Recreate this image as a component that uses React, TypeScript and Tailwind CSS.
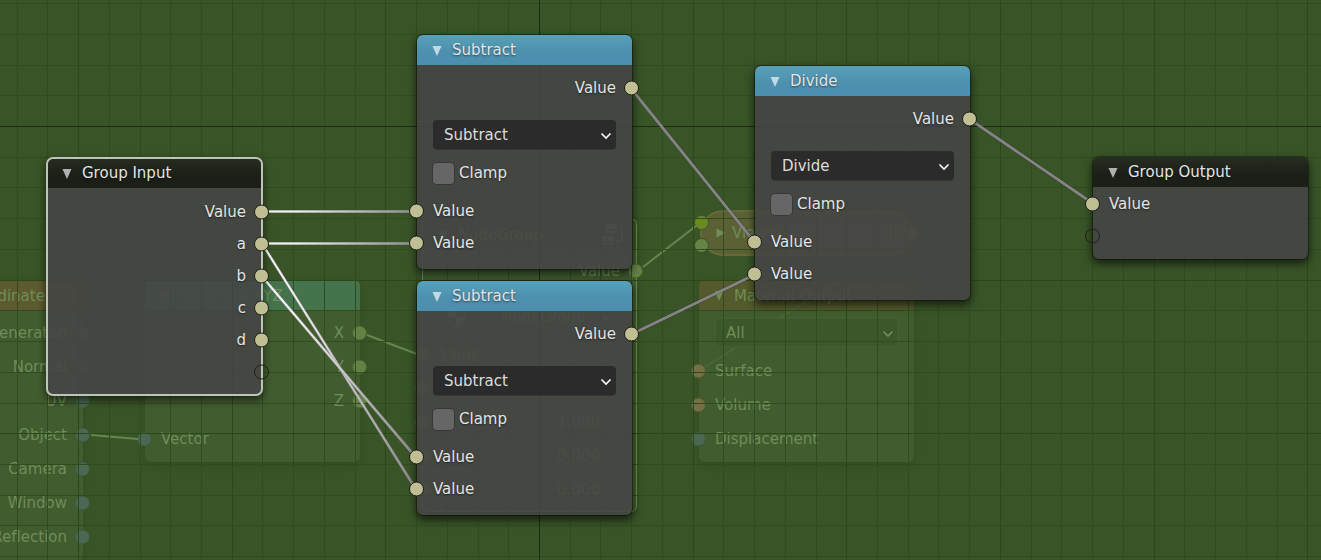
import React from "react";

type Tone = "value" | "color" | "lime" | "vector" | "shader" | "empty";

const MINOR = 30.73;
const ORIGIN = { x: 539, y: 126 };

const liveTones: Record<Tone, string> = {
  value: "bg-[#bfbf93] border-[#1e1e1a]",
  color: "bg-[#678447] border-[#35502a]",
  lime: "bg-[#6b8a25] border-[#3c5a24]",
  vector: "bg-[#4a6854] border-[#3b5a38]",
  shader: "bg-[#766f44] border-[#4a5a2c]",
  empty: "border-[#1c201a]",
};

const ghostTones: Record<Tone, string> = {
  ...liveTones,
  value: "bg-[#658246] border-[#45632f]",
};

function Socket({ side, tone = "value", ghost = false }: { side: "in" | "out"; tone?: Tone; ghost?: boolean }) {
  const tones = ghost ? ghostTones : liveTones;
  return (
    <span
      className={`absolute top-1/2 size-[15px] -translate-y-1/2 rounded-full border ${
        side === "in" ? "-left-2" : "-right-[7px]"
      } ${tones[tone]}`}
    />
  );
}

function Triangle({ right = false }: { right?: boolean }) {
  return (
    <svg viewBox="0 0 10 10" className="size-2.5 fill-current" aria-hidden="true">
      {right ? <path d="M0.5 0.5 9.5 5 0.5 9.5Z" /> : <path d="M0.5 0H9.5L5 10Z" />}
    </svg>
  );
}

function Chevron({ className }: { className: string }) {
  return (
    <svg viewBox="0 0 12 8" className={`h-2 w-3 ${className}`} fill="none" stroke="currentColor" strokeWidth="1.6" aria-hidden="true">
      <path d="M1.5 1.5 6 6 10.5 1.5" />
    </svg>
  );
}

const liveHeaders = {
  math: "bg-linear-to-b from-[#57a1b9] to-[#4d8fae] to-60%",
  group: "bg-linear-to-b from-[#272d21] to-[#1b1f18] to-60%",
};

function Node({
  title,
  kind,
  place,
  selected = false,
  children,
}: {
  title: string;
  kind: keyof typeof liveHeaders;
  place: string;
  selected?: boolean;
  children: React.ReactNode;
}) {
  return (
    <section
      aria-label={title}
      className={`absolute w-[215px] rounded-md bg-[#454545]/89 text-[#e4e4e4] shadow-[0_4px_9px_1px_rgba(0,0,0,0.6)] [text-shadow:0_1px_2px_rgba(0,0,0,0.5)] ${
        selected ? "outline-2 -outline-offset-1 outline-[#bfc4bb]" : "outline outline-black/30"
      } ${place}`}
    >
      <header className={`flex h-[30px] items-center gap-2.5 rounded-t-md pl-[15px] ${liveHeaders[kind]}`}>
        <button type="button" aria-label={`Collapse ${title}`} className="pt-0.5 text-white/65">
          <Triangle />
        </button>
        <h2>{title}</h2>
      </header>
      {children}
    </section>
  );
}

function Row({ label, side, tone, ghost }: { label: string; side: "in" | "out"; tone?: Tone; ghost?: boolean }) {
  return (
    <li className={`relative flex items-center px-4 ${ghost ? "h-[34px]" : "h-8"} ${side === "out" ? "justify-end" : ""}`}>
      {label}
      <Socket side={side} tone={tone} ghost={ghost} />
    </li>
  );
}

function MathNode({ operation, place }: { operation: string; place: string }) {
  return (
    <Node title={operation} kind="math" place={place}>
      <div className="pt-[7px] pb-2.5">
        <ul>
          <Row label="Value" side="out" />
        </ul>
        <div className="relative mx-4 mt-4">
          <select
            aria-label="Operation"
            defaultValue={operation}
            className="h-[29px] w-full appearance-none rounded bg-[#2b2b2b] pl-[11px] text-[#dcdcdc] shadow-[0_1px_0_rgba(0,0,0,0.2)]"
          >
            <option>Add</option>
            <option>Subtract</option>
            <option>Multiply</option>
            <option>Divide</option>
          </select>
          <Chevron className="pointer-events-none absolute top-3 right-1 text-white" />
        </div>
        <label className="mx-4 mt-2 flex h-8 items-center gap-[5px]">
          <input type="checkbox" className="size-[21px] appearance-none rounded bg-[#666666] shadow-[0_0_0_1px_rgba(0,0,0,0.2)] checked:bg-[#5680c2]" />
          Clamp
        </label>
        <ul className="mt-1.5">
          <Row label="Value" side="in" />
          <Row label="Value" side="in" />
        </ul>
      </div>
    </Node>
  );
}

function GhostNode({
  title,
  header,
  place,
  children,
}: {
  title: string;
  header: string;
  place: string;
  children: React.ReactNode;
}) {
  return (
    <section aria-label={title} className={`absolute w-[215px] rounded-md bg-[#415c2f] shadow-[0_3px_8px_rgba(0,0,0,0.1)] ${place}`}>
      <header className={`flex h-[31px] items-center gap-2.5 rounded-t-md pl-[15px] ${header}`}>
        <Triangle />
        <h2>{title}</h2>
      </header>
      {children}
    </section>
  );
}

function GhostTree() {
  return (
    <div className="absolute inset-0 text-[#6e8d58]">
      <GhostNode title="Texture Coordinate" header="bg-[#5c5a2e]" place="top-[280px] -left-[132px]">
        <ul className="pt-[5px] pb-2">
          {["Generated", "Normal", "UV", "Object", "Camera", "Window", "Reflection"].map((name) => (
            <Row key={name} label={name} side="out" tone="vector" ghost />
          ))}
        </ul>
      </GhostNode>

      <GhostNode title="Separate XYZ" header="bg-[#44734c]" place="top-[280px] left-[145px]">
        <ul className="pt-[5px]">
          <Row label="X" side="out" ghost />
          <Row label="Y" side="out" ghost />
          <Row label="Z" side="out" ghost />
        </ul>
        <ul className="pt-1 pb-1.5">
          <Row label="Vector" side="in" tone="vector" ghost />
        </ul>
      </GhostNode>

      <GhostNode title="NodeGroup" header="bg-[#3a5728]" place="top-[218px] left-[422px] border border-[#6c8b55]">
        <svg viewBox="0 0 22 22" className="absolute top-1 right-3 size-[22px]" aria-hidden="true">
          <rect x="3" y="1" width="12" height="9" rx="2" fill="currentColor" />
          <rect x="0" y="13" width="12" height="9" rx="2" fill="currentColor" />
          <path d="M5 7H13M2 19H10" stroke="#3a5728" strokeWidth="1.5" />
          <path d="M17 4H20V18H14M16 16 14 18 16 20" fill="none" stroke="currentColor" strokeWidth="1.5" />
        </svg>
        <ul className="pt-1">
          <Row label="Value" side="out" ghost />
        </ul>
        <div className="mx-4 mt-3.5 flex h-[29px] items-center gap-1">
          <svg viewBox="0 0 22 22" className="ml-1.5 size-[22px]" aria-hidden="true">
            <circle cx="11" cy="11" r="9.5" fill="none" stroke="currentColor" strokeWidth="1.5" />
            <path d="M11 3A8 8 0 0 0 3 11H11ZM11 11V19A8 8 0 0 0 19 11Z" fill="currentColor" />
          </svg>
          <Chevron className="" />
          <span className="ml-3.5">NodeGroup</span>
          <Chevron className="mr-2 ml-auto" />
        </div>
        <ul className="pt-1.5 pb-1">
          <Row label="Value" side="in" ghost />
          {["", "1.000", "0.000", "0.000"].map((amount, index) => (
            <li key={index} className="relative flex h-[34px] items-center justify-end px-9">
              {amount}
              <Socket side="in" ghost />
            </li>
          ))}
        </ul>
      </GhostNode>

      <section
        aria-label="Viewer"
        className="absolute top-[210px] left-[700px] flex h-[46px] w-[214px] items-center gap-1.5 rounded-full border-2 border-[#676a37] bg-[#5c6135] pl-3.5"
      >
        <Triangle right />
        <h2>Viewer</h2>
        <span className="mr-3.5 ml-auto">||</span>
        <span className={`absolute top-[3px] -left-2 size-[15px] rounded-full border ${ghostTones.lime}`} />
        <span className={`absolute top-[26px] -left-2 size-[15px] rounded-full border ${ghostTones.color}`} />
        <Socket side="out" tone="shader" ghost />
      </section>

      <GhostNode title="Material Output" header="bg-[#545a2b]" place="top-[280px] left-[699px]">
        <div className="relative mx-4 mt-[7px]">
          <select
            aria-label="Target"
            defaultValue="All"
            className="h-[29px] w-full appearance-none rounded border border-[#45602f] bg-[#3c5729] pl-2.5"
          >
            <option>All</option>
            <option>Cycles</option>
            <option>Eevee</option>
          </select>
          <Chevron className="pointer-events-none absolute top-3 right-1" />
        </div>
        <ul className="pt-[7px] pb-1.5">
          <Row label="Surface" side="in" tone="shader" ghost />
          <Row label="Volume" side="in" tone="shader" ghost />
          <Row label="Displacement" side="in" tone="vector" ghost />
        </ul>
      </GhostNode>

      <svg className="absolute inset-0 size-full" fill="none" strokeWidth="2" aria-hidden="true">
        <path d="M91 435 138 439M367 335 422 356M643 267 696 226" stroke="#66854f" />
        <path d="M705 367 735 348M780 318 880 255" stroke="#4b6638" />
      </svg>
    </div>
  );
}

function Grid() {
  const steps = Array.from({ length: 161 }, (_, i) => i - 40);
  const tint = (step: number) => (step === 0 ? "#1e2b12" : step % 5 === 0 ? "#2b4819" : "#304c1f");
  const order = [...steps.filter((s) => s % 5), ...steps.filter((s) => s % 5 === 0 && s), 0];
  return (
    <svg className="absolute inset-0 size-full" shapeRendering="crispEdges" aria-hidden="true">
      {order.map((s) => {
        const x = Math.round(ORIGIN.x + s * MINOR);
        const y = Math.round(ORIGIN.y + s * MINOR);
        return (
          <g key={s} fill={tint(s)}>
            <rect x={x} y="0" width="1" height="100%" />
            <rect x="0" y={y} width="100%" height="1" />
          </g>
        );
      })}
    </svg>
  );
}

const links = [
  { from: [262, 211], to: [416, 211], lit: true },
  { from: [262, 243], to: [416, 243], lit: true },
  { from: [262, 243], to: [416, 489], lit: true },
  { from: [262, 276], to: [416, 457], lit: true },
  { from: [631, 88], to: [755, 242], lit: false },
  { from: [631, 334], to: [755, 274], lit: false },
  { from: [970, 119], to: [1093, 203], lit: false },
];

function Links() {
  return (
    <svg className="absolute inset-0 size-full" aria-hidden="true">
      <defs>
        <linearGradient id="lit" gradientUnits="userSpaceOnUse" x1="263" y1="0" x2="416" y2="0">
          <stop offset="0.2" stopColor="#f4f2f4" />
          <stop offset="1" stopColor="#8a888a" />
        </linearGradient>
      </defs>
      {links.map(({ from, to, lit }, index) => {
        const ends = { x1: from[0], y1: from[1] + 0.5, x2: to[0], y2: to[1] + 0.51 };
        return (
          <g key={index}>
            <line {...ends} stroke={lit ? "#8a888a" : "#1c2416"} strokeOpacity={lit ? 0.7 : 0.3} strokeWidth={lit ? 3 : 4} />
            <line {...ends} stroke={lit ? "url(#lit)" : "#858386"} strokeWidth={lit ? 2 : 2.8} />
          </g>
        );
      })}
    </svg>
  );
}

export default function App() {
  return (
    <main className="relative min-h-screen w-full overflow-hidden bg-[#395427] font-['DejaVu_Sans',sans-serif] text-[15px] leading-5">
      <GhostTree />
      <Grid />
      <Links />

      <Node title="Group Input" kind="group" place="top-[158px] left-[47px]" selected>
        <ul className="pt-2 pb-[7px]">
          {["Value", "a", "b", "c", "d"].map((name) => (
            <Row key={name} label={name} side="out" />
          ))}
          <Row label="" side="out" tone="empty" />
        </ul>
      </Node>

      <MathNode operation="Subtract" place="top-[35px] left-[417px]" />
      <MathNode operation="Subtract" place="top-[281px] left-[417px]" />
      <MathNode operation="Divide" place="top-[66px] left-[755px]" />

      <Node title="Group Output" kind="group" place="top-[157px] left-[1093px]">
        <ul className="pt-px pb-[7px]">
          <Row label="Value" side="in" />
          <Row label="" side="in" tone="empty" />
        </ul>
      </Node>
    </main>
  );
}
